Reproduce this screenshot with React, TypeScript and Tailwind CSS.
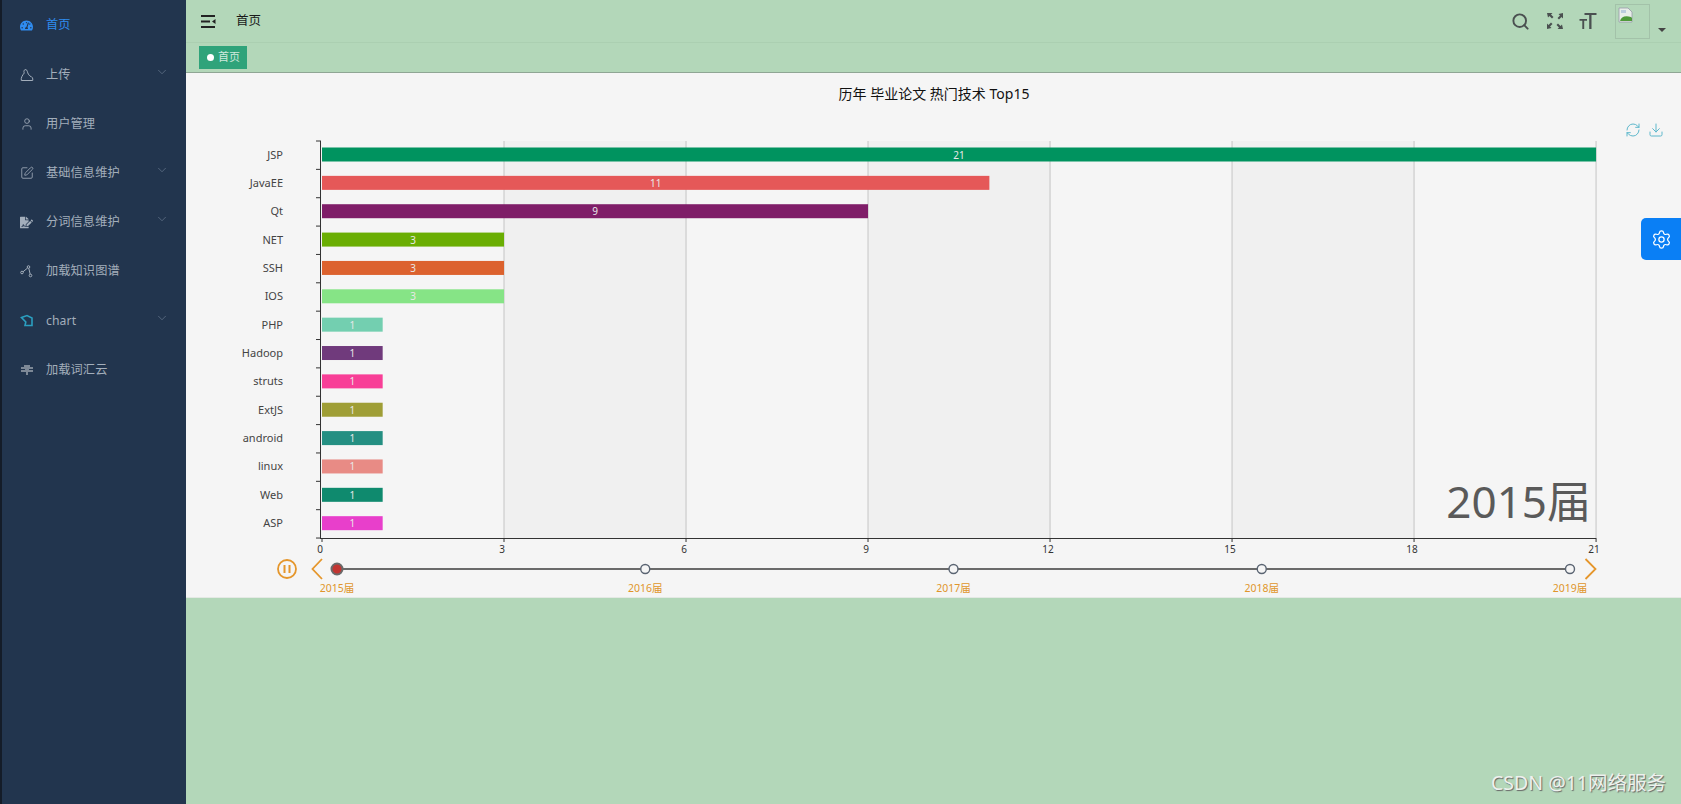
import { ChevronDown, Search, User, SquarePen, Settings, RefreshCw, Download } from "lucide-react";
import { FaTachometerAlt, FaFileSignature } from "react-icons/fa";
import type { ReactNode } from "react";

const cjk = '"Noto Sans","Noto Sans CJK SC",sans-serif';

const UploadIcon = () => (
    <svg width="14" height="14" viewBox="0 0 14 14" fill="none" stroke="currentColor" strokeWidth="1">
        <path d="M1.300 12.500h11.400c.6-2-.6-4-2.700-4.400C8.800 7 7.800 5.500 7.300 3.400 7 1.600 5.200 1 4.300 2.200 3.700 3 3.900 4 4.300 5 2.600 7 .7 9.800 1.300 12.500z" />
    </svg>
);

const GraphIcon = () => (
    <svg width="13" height="13" viewBox="0 0 13 13" fill="none" stroke="currentColor" strokeWidth="1">
        <circle cx="2" cy="7.500" r="1.300" />
        <circle cx="8.500" cy="2" r="1.300" />
        <circle cx="10.500" cy="10.500" r="1.300" />
        <path d="M3 6.800 7.600 3M8.800 3.300l1.400 6" />
    </svg>
);

const ChartIcon = () => (
    <svg width="14" height="14" viewBox="0 0 14 14" fill="none" stroke="#2b9fc0" strokeWidth="1.600">
        <path d="M1.500 3.500 7 1.500l5 2.500v7.500H5l.8-3.500z" />
    </svg>
);

const CloudIcon = () => (
    <svg width="14" height="12" viewBox="0 0 14 12" fill="#7d8896">
        <path d="M4 1h6v2h3v2H9v1h4v2H8v3H6V8H1V6h4V5H1V3h3z" />
    </svg>
);

const menus: { name: string; icon: ReactNode; arrow?: boolean; active?: boolean }[] = [
    { name: "首页", icon: <FaTachometerAlt size={13} />, active: true },
    { name: "上传", icon: <UploadIcon />, arrow: true },
    { name: "用户管理", icon: <User size={14} strokeWidth={1.400} /> },
    { name: "基础信息维护", icon: <SquarePen size={14} strokeWidth={1.400} />, arrow: true },
    { name: "分词信息维护", icon: <FaFileSignature size={13} />, arrow: true },
    { name: "加载知识图谱", icon: <GraphIcon /> },
    { name: "chart", icon: <ChartIcon />, arrow: true },
    { name: "加载词汇云", icon: <CloudIcon /> },
];

const bars = [
    { name: "JSP", value: 21, color: "#00935f" },
    { name: "JavaEE", value: 11, color: "#e55858" },
    { name: "Qt", value: 9, color: "#7f1d68" },
    { name: "NET", value: 3, color: "#6aae03" },
    { name: "SSH", value: 3, color: "#dc622e" },
    { name: "IOS", value: 3, color: "#86e486" },
    { name: "PHP", value: 1, color: "#73cfb0" },
    { name: "Hadoop", value: 1, color: "#703a7c" },
    { name: "struts", value: 1, color: "#f83f97" },
    { name: "ExtJS", value: 1, color: "#9f9e36" },
    { name: "android", value: 1, color: "#248f82" },
    { name: "linux", value: 1, color: "#e88b85" },
    { name: "Web", value: 1, color: "#0f8a6e" },
    { name: "ASP", value: 1, color: "#e83fcb" },
];

const x0 = 322;
const unit = 60.67;
const top = 141;
const bottom = 538;
const step = 28.36;
const years = ["2015届", "2016届", "2017届", "2018届", "2019届"];

const Chart = () => (
    <svg viewBox="186 73 1495 525" className="block h-[525px] w-[1495px]" style={{ fontFamily: cjk }}>
        <text x="934" y="99" textAnchor="middle" fontSize="14" fill="#111">历年 毕业论文 热门技术 Top15</text>

        {/* split area */}
        {[3, 9, 15].map((v) => (
            <rect key={v} x={x0 + v * unit} y={top} width={unit * 3} height={bottom - top} fill="#f0f0f0" />
        ))}
        {[3, 6, 9, 12, 15, 18, 21].map((v) => (
            <line key={v} x1={x0 + v * unit} x2={x0 + v * unit} y1={top} y2={bottom} stroke="#ccc" strokeWidth="1.200" />
        ))}

        {bars.map((b, i) => {
            const y = 147.500 + i * step;
            return (
                <g key={b.name}>
                    <rect x={x0} y={y} width={b.value * unit} height="14" fill={b.color} />
                    <text x={x0 + (b.value * unit) / 2} y={y + 11} textAnchor="middle" fontSize="10" fill="#e8e8e8">{b.value}</text>
                    <text x="283" y={y + 11} textAnchor="end" fontSize="11" fill="#444">{b.name}</text>
                </g>
            );
        })}

        {/* axes */}
        <line x1="320.500" x2="320.500" y1={top} y2={bottom} stroke="#333" />
        <line x1="320" x2="1596" y1="538.500" y2="538.500" stroke="#333" />
        {Array.from({ length: 15 }).map((_, i) => (
            <line key={i} x1="316" x2="321" y1={top + i * step} y2={top + i * step} stroke="#333" />
        ))}
        {[0, 3, 6, 9, 12, 15, 18, 21].map((v) => (
            <g key={v}>
                <line x1={x0 + v * unit} x2={x0 + v * unit} y1="538" y2="542" stroke="#333" />
                <text x={x0 + v * unit - 2} y="553" textAnchor="middle" fontSize="10" fill="#333">{v}</text>
            </g>
        ))}

        <text x="1591" y="518" textAnchor="end" fontSize="44" fill="#5a5a5a">2015届</text>

        {/* timeline */}
        <circle cx="287" cy="569" r="9" fill="none" stroke="#e5962b" strokeWidth="1.800" />
        <path d="M284.500 565v8M289.500 565v8" stroke="#e5962b" strokeWidth="2" />
        <path d="M322 559 312.500 569 322 579" fill="none" stroke="#e5962b" strokeWidth="1.800" />
        <path d="M1585.500 559 1595.500 569 1585.500 579" fill="none" stroke="#e5962b" strokeWidth="1.800" />
        <line x1="337" x2="1570" y1="569" y2="569" stroke="#6a6a6a" strokeWidth="2.200" />
        {years.map((y, i) => {
            const cx = 337 + i * 308.250;
            return (
                <g key={y}>
                    {i === 0 ? (
                        <circle cx={cx} cy="569" r="5.500" fill="#c23531" stroke="#6a6a6a" strokeWidth="2" />
                    ) : (
                        <circle cx={cx} cy="569" r="4.500" fill="#f5f5f5" stroke="#5a6472" strokeWidth="1.400" />
                    )}
                    <text x={cx} y="592" textAnchor="middle" fontSize="10.500" fill="#e0952b">{y}</text>
                </g>
            );
        })}
    </svg>
);

const App = () => {
    return (
        <div className="relative flex h-[804px] w-[1681px] overflow-hidden bg-[#b3d7b9]" style={{ fontFamily: cjk }}>
            {/* sidebar */}
            <aside className="h-full w-[186px] shrink-0 border-l-2 border-[#141c28] bg-[#22354e] pt-[1px]">
                {menus.map((m) => (
                    <div key={m.name} className={`flex h-[49.200px] items-center pl-[18px] pr-[17px] ${m.active ? "text-[#2f8cf0]" : "text-[#a3aebb]"}`}>
                        <span className="flex w-[26px] shrink-0 items-center">{m.icon}</span>
                        <span className="flex-1 text-[12.200px] tracking-[0.100px]">{m.name}</span>
                        {m.arrow && <ChevronDown size={14} strokeWidth={0.900} className="mb-[6px] text-[#8090a4]" />}
                    </div>
                ))}
            </aside>

            <main className="flex min-w-0 flex-1 flex-col">
                {/* top bar */}
                <header className="flex h-[43px] shrink-0 items-center border-b border-[#abcfb1] pl-[15px] pr-[15px]">
                    <svg width="15" height="13" viewBox="0 0 15 13" fill="#222">
                        <path d="M0 0h14v2H0zM0 5.500h9v2H0zM0 11h14v2H0zM14.500 4v5l-3.500-2.500z" />
                    </svg>
                    <span className="ml-[20px] text-[12.500px] text-[#1a1a1a]">首页</span>
                    <div className="ml-auto flex items-center text-[#4a5050]">
                        <Search size={19} strokeWidth={2.400} />
                        <svg width="16" height="16" viewBox="0 0 16 16" fill="currentColor" className="ml-[17px]">
                            <path d="M0 0h5.500L4 1.500 6.500 4 5 5.500 2.500 3 1 4.500zM16 0v5.500L14.500 4 12 6.500 10.500 5 13 2.500 11.500 1zM0 16v-5.500L1.500 12 4 9.500 5.500 11 3 13.500 4.500 15zM16 16h-5.500L12 14.500 9.500 12 11 10.500 13.500 13 15 11.500z" />
                        </svg>
                        <svg width="18" height="16" viewBox="0 0 17 16" fill="currentColor" className="ml-[16px]">
                            <path d="M5 0h12v2h-5v14H9.700V2H5zM0 6h7.500v1.800H4.700V16H2.800V7.800H0z" />
                        </svg>
                        <div className="ml-[18px] h-[35px] w-[35px] border border-[#a3c2a9] pl-[2px] pt-[2px]">
                            <svg width="16" height="16" viewBox="0 0 16 16">
                                <path d="M1 1h9l4 4v10H1z" fill="#e8eee9" stroke="#99a" strokeWidth="0.800" />
                                <path d="M2 14c1-4 5-6 11-4l1 1v3z" fill="#4f9a3a" />
                                <path d="M3 3h5v3H3z" fill="#bcd" />
                            </svg>
                        </div>
                        <span className="ml-[8px] mt-[18px] h-0 w-0 border-x-[4px] border-t-[4px] border-x-transparent border-t-[#444]" />
                    </div>
                </header>

                {/* tags */}
                <div className="h-[30px] shrink-0 border-b border-[#8fa694] pl-[13px] pt-[3px]">
                    <div className="flex h-[23px] w-[48px] items-center bg-[#2fa37a] pl-[8px] text-[11px] text-[#cfe9dd]">
                        <span className="mr-[4px] h-[7px] w-[7px] rounded-full bg-white" />
                        首页
                    </div>
                </div>

                <section className="h-[525px] shrink-0 border-b border-[#e4e9e4] bg-[#f5f5f5]">
                    <Chart />
                </section>
            </main>

            {/* chart toolbox */}
            <div className="absolute left-[1625px] top-[122px] flex gap-[7px] text-[#5fb8cc]">
                <RefreshCw size={16} strokeWidth={1.500} />
                <Download size={16} strokeWidth={1.500} />
            </div>

            {/* settings */}
            <div className="absolute right-0 top-[218px] flex h-[42px] w-[40px] items-center justify-center rounded-l-[5px] bg-[#0a7ff5] text-white">
                <Settings size={21} strokeWidth={1.400} />
            </div>

            <div className="absolute bottom-[7px] right-[15px] text-[19.500px] text-[#eef1ee]" style={{ textShadow: "1px 1px 1px #666" }}>
                CSDN @11网络服务
            </div>
        </div>
    );
};

export default App;
